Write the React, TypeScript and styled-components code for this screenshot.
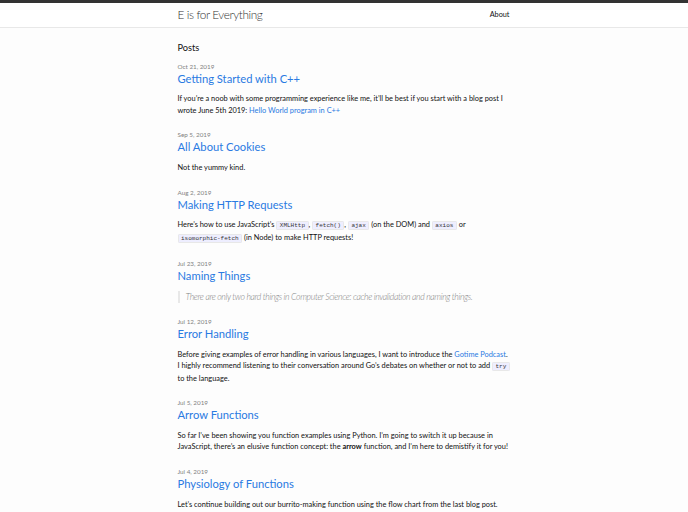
import React from "react";
import styled, { createGlobalStyle } from "styled-components";

const Global = createGlobalStyle`
  html, body { margin: 0; padding: 0; background: #fdfdfd; }
  body {
    font-family: Lato, "Noto Sans", sans-serif;
    font-size: 7.4px;
    line-height: 11.5px;
    color: #111;
    -webkit-font-smoothing: antialiased;
  }
  * { box-sizing: border-box; }
`;

const Header = styled.header`
  border-top: 3px solid #333;
  border-bottom: 1px solid #e8e8e8;
  min-height: 25px;
  background: #fff;
`;

const Wrapper = styled.div`
  max-width: 333px;
  margin: 0 auto;
  padding: 0;
`;

const HeaderInner = styled(Wrapper)`
  display: flex;
  justify-content: space-between;
  align-items: center;
  height: 24px;
`;

const SiteTitle = styled.a`
  font-size: 11.8px;
  font-weight: 300;
  letter-spacing: -0.4px;
  color: #333;
  text-decoration: none;
`;

const NavLink = styled.a`
  font-size: 7.3px;
  color: #111;
  text-decoration: none;
  margin-right: 1px;
`;

const Main = styled.main`
  padding: 13.5px 0;
`;

const ListHeading = styled.h1`
  font-size: 9.2px;
  font-weight: 400;
  margin: 0 0 8px;
  line-height: 12px;
`;

const PostList = styled.ul`
  list-style: none;
  margin: 0;
  padding: 0;
`;

const PostItem = styled.li`
  margin-bottom: 14.2px;
`;

const Meta = styled.span`
  display: block;
  font-size: 6.3px;
  line-height: 9px;
  color: #828282;
`;

const PostTitle = styled.h3`
  margin: 0;
  font-size: 11.2px;
  font-weight: 400;
  line-height: 16px;
`;

const TitleLink = styled.a`
  color: #2a7ae2;
  text-decoration: none;
`;

const Excerpt = styled.p`
  margin: 6.7px 0 0;
`;

const Link = styled.a`
  color: #2a7ae2;
  text-decoration: none;
`;

const Code = styled.code`
  font-family: "Liberation Mono", "DejaVu Sans Mono", monospace;
  font-size: 6px;
  background: #eef;
  border: 1px solid #e8e8e8;
  border-radius: 1.5px;
  padding: 0 2.5px;
  color: #333;
  white-space: nowrap;
`;

const Quote = styled.blockquote`
  margin: 7px 0 0;
  padding-left: 6px;
  border-left: 2px solid #e8e8e8;
  color: #828282;
  font-size: 8.7px;
  font-style: italic;
  font-weight: 300;
  letter-spacing: -0.35px;
  line-height: 12px;
  margin-bottom: 1.5px;
`;

type Post = { date: string; title: string; body: React.ReactNode };

const posts: Post[] = [
  {
    date: "Oct 21, 2019",
    title: "Getting Started with C++",
    body: (
      <Excerpt>
        If you’re a noob with some programming experience like me, it’ll be best if you start with a blog post I
        wrote June 5th 2019: <Link href="#">Hello World program in C++</Link>
      </Excerpt>
    ),
  },
  {
    date: "Sep 5, 2019",
    title: "All About Cookies",
    body: <Excerpt>Not the yummy kind.</Excerpt>,
  },
  {
    date: "Aug 2, 2019",
    title: "Making HTTP Requests",
    body: (
      <Excerpt>
        Here’s how to use JavaScript’s <Code>XMLHttp</Code>, <Code>fetch()</Code>, <Code>ajax</Code> (on the DOM) and{" "}
        <Code>axios</Code> or <Code>isomorphic-fetch</Code> (in Node) to make HTTP requests!
      </Excerpt>
    ),
  },
  {
    date: "Jul 23, 2019",
    title: "Naming Things",
    body: <Quote>There are only two hard things in Computer Science: cache invalidation and naming things.</Quote>,
  },
  {
    date: "Jul 12, 2019",
    title: "Error Handling",
    body: (
      <Excerpt>
        Before giving examples of error handling in various languages, I want to introduce the{" "}
        <Link href="#">Gotime Podcast</Link>. I highly recommend listening to their conversation around Go’s debates on
        whether or not to add <Code>try</Code> to the language.
      </Excerpt>
    ),
  },
  {
    date: "Jul 5, 2019",
    title: "Arrow Functions",
    body: (
      <Excerpt>
        So far I’ve been showing you function examples using Python. I’m going to switch it up because in
        JavaScript, there’s an elusive function concept: the <b>arrow</b> function, and I’m here to demistify it for you!
      </Excerpt>
    ),
  },
  {
    date: "Jul 4, 2019",
    title: "Physiology of Functions",
    body: (
      <Excerpt>
        Let’s continue building out our burrito-making function using the flow chart from the last blog post.
        We’ll look at the parts that make up a function and how they work together to make our burrito.
      </Excerpt>
    ),
  },
];

export default function App() {
  return (
    <>
      <Global />
      <Header>
        <HeaderInner>
          <SiteTitle href="#">E is for Everything</SiteTitle>
          <NavLink href="#">About</NavLink>
        </HeaderInner>
      </Header>
      <Main>
        <Wrapper>
          <ListHeading>Posts</ListHeading>
          <PostList>
            {posts.map((p) => (
              <PostItem key={p.title}>
                <Meta>{p.date}</Meta>
                <PostTitle>
                  <TitleLink href="#">{p.title}</TitleLink>
                </PostTitle>
                {p.body}
              </PostItem>
            ))}
          </PostList>
        </Wrapper>
      </Main>
    </>
  );
}
